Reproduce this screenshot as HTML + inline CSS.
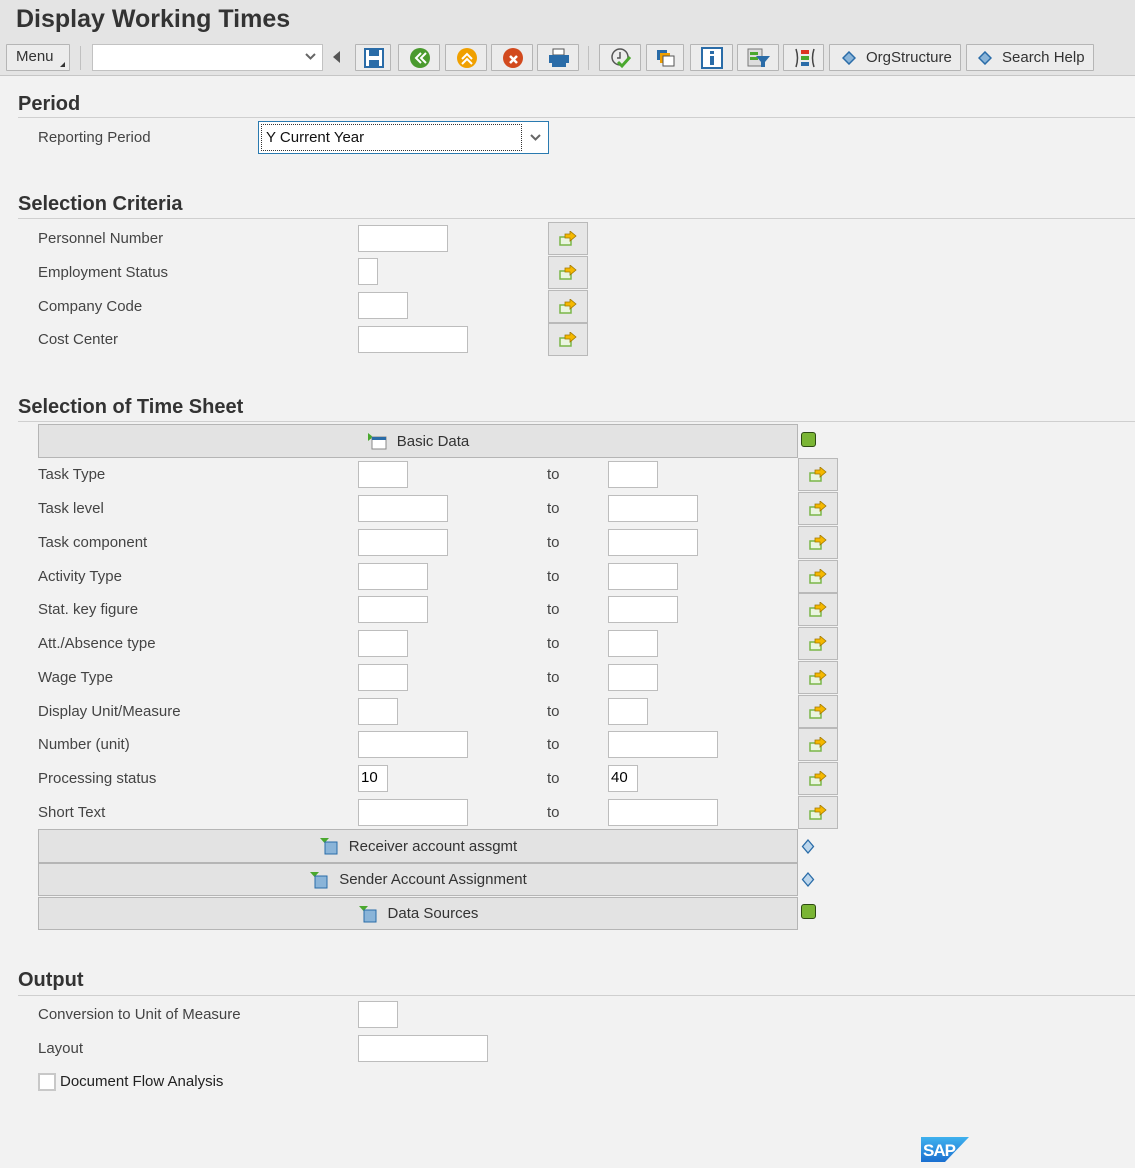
<!DOCTYPE html>
<html><head><meta charset="utf-8"><style>
*{box-sizing:border-box;margin:0;padding:0}
body{width:1135px;height:1168px;background:#f2f2f2;font-family:"Liberation Sans",Arial,sans-serif;position:relative;overflow:hidden;color:#333}
.a{position:absolute}
.hdr{left:0;top:0;width:1135px;height:76px;background:#e4e4e4;border-bottom:1px solid #c6c6c6}
.title{left:16px;top:5px;font-size:25px;font-weight:bold;color:#333}
.tb{position:absolute;top:44px;height:27px;border:1px solid #b5b5b5;background:#ececec;border-radius:1px}
.lbl{position:absolute;left:38px;font-size:15px;color:#444;line-height:18px}
.h{position:absolute;left:18px;font-size:20px;font-weight:bold;color:#333}
.ln{position:absolute;left:18px;width:1117px;height:1px;background:#cfcfcf}
.in{position:absolute;height:27px;background:#fff;border:1px solid #bdbdbd;font-size:15px;padding:3px 0 0 2px;color:#000}
.to{position:absolute;left:547px;font-size:15px;color:#444}
.bt{position:absolute;width:40px;height:33px;border:1px solid #b9b9b9;background:#e6e6e6;display:flex;align-items:center;justify-content:center}
.bar{position:absolute;left:38px;width:760px;height:34px;border:1px solid #b5b5b5;background:#e3e3e3;font-size:15px;color:#333;display:flex;align-items:center;justify-content:center;gap:10px}
.gs{position:absolute;left:801px;width:15px;height:15px;background:#7ab534;border:1.5px solid #2d4a12;border-radius:3px}
</style></head><body>
<div class="a hdr"></div>
<div class="a title">Display Working Times</div>
<div class="tb" style="left:6px;width:64px;font-size:15px;padding:3px 0 0 9px">Menu<span style="position:absolute;right:4px;bottom:3px;width:0;height:0;border-left:5px solid transparent;border-bottom:5px solid #333"></span></div>
<div class="a" style="left:80px;top:46px;width:1px;height:24px;background:#c0c0c0"></div>
<div class="a" style="left:92px;top:44px;width:231px;height:27px;background:#fff;border:1px solid #c2c2c2"><svg class="a" style="right:6px;top:8px" width="11" height="8"><path d="M1 1l4.5 4.5L10 1" stroke="#666" stroke-width="2" fill="none"/></svg></div>
<svg class="a" style="left:333px;top:51px" width="8" height="12"><path d="M7 0v12L0 6z" fill="#555"/></svg>
<div class="tb" style="left:355px;width:36px"><svg class="a" style="left:8px;top:3px" width="20" height="20"><rect x="1" y="1" width="18" height="18" fill="#fff" stroke="#2a6ca8" stroke-width="2"/><rect x="5" y="2" width="10" height="6" fill="#2a6ca8"/><rect x="5" y="12" width="10" height="6" fill="#2a6ca8"/></svg></div>
<div class="tb" style="left:398px;width:42px"><svg class="a" style="left:10px;top:2px" width="22" height="22"><circle cx="11" cy="11" r="10" fill="#4a9a2e"/><path d="M12 6l-5 5 5 5M17 6l-5 5 5 5" stroke="#fff" stroke-width="2" fill="none"/></svg></div>
<div class="tb" style="left:445px;width:42px"><svg class="a" style="left:10px;top:2px" width="22" height="22"><circle cx="11" cy="11" r="10" fill="#f0a000"/><path d="M6 12l5-5 5 5M6 17l5-5 5 5" stroke="#fff" stroke-width="2" fill="none"/></svg></div>
<div class="tb" style="left:491px;width:42px"><svg class="a" style="left:10px;top:2px" width="22" height="22"><circle cx="11" cy="11" r="10" fill="#d24a1e"/><path d="M8 9l7 7M15 9l-7 7" stroke="#fff" stroke-width="2.5"/></svg></div>
<div class="tb" style="left:537px;width:42px"><svg class="a" style="left:10px;top:3px" width="22" height="20"><rect x="5" y="1" width="11" height="6" fill="#fff" stroke="#555"/><rect x="1" y="7" width="20" height="8" fill="#2a6ca8"/><rect x="4" y="15" width="14" height="4" fill="#2a6ca8"/></svg></div>
<div class="a" style="left:588px;top:46px;width:1px;height:24px;background:#c0c0c0"></div>
<div class="tb" style="left:599px;width:42px"><svg class="a" style="left:10px;top:2px" width="22" height="22"><circle cx="10" cy="10" r="8" fill="none" stroke="#555" stroke-width="1.5"/><path d="M10 5v6h-3" stroke="#555" stroke-width="1.5" fill="none"/><path d="M8 15l4 4 8-9" stroke="#4aa82e" stroke-width="3" fill="none"/></svg></div>
<div class="tb" style="left:646px;width:38px"><svg class="a" style="left:8px;top:3px" width="22" height="20"><rect x="2" y="2" width="10" height="10" fill="#2a6ca8"/><rect x="5" y="5" width="10" height="10" fill="#f0a000"/><rect x="8" y="8" width="11" height="10" fill="#fff" stroke="#555"/></svg></div>
<div class="tb" style="left:690px;width:43px"><svg class="a" style="left:10px;top:2px" width="22" height="22"><rect x="1" y="1" width="20" height="20" fill="#fff" stroke="#2a6ca8" stroke-width="2"/><rect x="9" y="4" width="4" height="3" fill="#2a6ca8"/><rect x="9" y="9" width="4" height="9" fill="#2a6ca8"/></svg></div>
<div class="tb" style="left:737px;width:42px"><svg class="a" style="left:9px;top:3px" width="24" height="20"><rect x="1" y="1" width="14" height="17" fill="#ddd" stroke="#777"/><rect x="3" y="4" width="8" height="3" fill="#4aa82e"/><rect x="3" y="9" width="8" height="3" fill="#4aa82e"/><path d="M9 8h14l-5 6v5h-4v-5z" fill="#2a6ca8"/></svg></div>
<div class="tb" style="left:783px;width:41px"><svg class="a" style="left:9px;top:2px" width="24" height="22"><path d="M3 2q3 9 0 18M21 2q-3 9 0 18" stroke="#444" stroke-width="1.5" fill="none"/><rect x="8" y="3" width="8" height="4" fill="#d32"/><rect x="8" y="9" width="8" height="4" fill="#4aa82e"/><rect x="8" y="15" width="8" height="4" fill="#2a6ca8"/></svg></div>
<div class="tb" style="left:829px;width:132px;font-size:15px;padding:4px 0 0 36px">OrgStructure<svg class="a" style="left:12px;top:6px" width="14" height="14"><path d="M7 1l6 6-6 6-6-6z" fill="#8ab4d8" stroke="#2a6ca8" stroke-width="1.5"/></svg></div>
<div class="tb" style="left:966px;width:128px;font-size:15px;padding:4px 0 0 35px">Search Help<svg class="a" style="left:11px;top:6px" width="14" height="14"><path d="M7 1l6 6-6 6-6-6z" fill="#8ab4d8" stroke="#2a6ca8" stroke-width="1.5"/></svg></div>

<div class="h" style="top:93px">Period</div><div class="ln" style="top:117px"></div>
<div class="lbl" style="top:129px">Reporting Period</div>
<div class="a" style="left:258px;top:121px;width:291px;height:33px;background:#fff;border:1px solid #2a7ab0"><div class="a" style="left:2px;top:2px;width:261px;height:27px;border:1px dotted #333;font-size:15px;padding:4px 0 0 4px;color:#111">Y Current Year</div><svg class="a" style="right:7px;top:12px" width="11" height="8"><path d="M1 1l4.5 4.5L10 1" stroke="#666" stroke-width="2" fill="none"/></svg></div>

<div class="h" style="top:193px">Selection Criteria</div><div class="ln" style="top:218px"></div>
<div class="lbl" style="top:230px">Personnel Number</div><div class="in" style="left:358px;top:225px;width:90px"></div>
<div class="lbl" style="top:264px">Employment Status</div><div class="in" style="left:358px;top:258px;width:20px"></div>
<div class="lbl" style="top:298px">Company Code</div><div class="in" style="left:358px;top:292px;width:50px"></div>
<div class="lbl" style="top:331px">Cost Center</div><div class="in" style="left:358px;top:326px;width:110px"></div>
<div class="bt" style="left:548px;top:222px"><svg width="18" height="16"><rect x="1" y="6" width="11" height="8" fill="#eaf5e0" stroke="#7ab648" stroke-width="1.5"/><path d="M6 3h5V0l6 5-6 5V7H6z" fill="#f5b800" stroke="#a07800" stroke-width=".8"/></svg></div>
<div class="bt" style="left:548px;top:256px"><svg width="18" height="16"><rect x="1" y="6" width="11" height="8" fill="#eaf5e0" stroke="#7ab648" stroke-width="1.5"/><path d="M6 3h5V0l6 5-6 5V7H6z" fill="#f5b800" stroke="#a07800" stroke-width=".8"/></svg></div>
<div class="bt" style="left:548px;top:290px"><svg width="18" height="16"><rect x="1" y="6" width="11" height="8" fill="#eaf5e0" stroke="#7ab648" stroke-width="1.5"/><path d="M6 3h5V0l6 5-6 5V7H6z" fill="#f5b800" stroke="#a07800" stroke-width=".8"/></svg></div>
<div class="bt" style="left:548px;top:323px"><svg width="18" height="16"><rect x="1" y="6" width="11" height="8" fill="#eaf5e0" stroke="#7ab648" stroke-width="1.5"/><path d="M6 3h5V0l6 5-6 5V7H6z" fill="#f5b800" stroke="#a07800" stroke-width=".8"/></svg></div>

<div class="h" style="top:396px">Selection of Time Sheet</div><div class="ln" style="top:421px"></div>
<div class="bar" style="top:424px"><svg width="20" height="18"><path d="M1 1v8l5-4z" fill="#4aa82e"/><rect x="5" y="5" width="14" height="12" fill="#fff" stroke="#888"/><rect x="5" y="5" width="14" height="3" fill="#2a6ca8"/></svg>Basic Data</div>
<div class="gs" style="top:432px"></div>

<div class="lbl" style="top:466px">Task Type</div><div class="in" style="left:358px;top:461px;width:50px"></div><div class="to" style="top:466px">to</div><div class="in" style="left:608px;top:461px;width:50px"></div>
<div class="lbl" style="top:500px">Task level</div><div class="in" style="left:358px;top:495px;width:90px"></div><div class="to" style="top:500px">to</div><div class="in" style="left:608px;top:495px;width:90px"></div>
<div class="lbl" style="top:534px">Task component</div><div class="in" style="left:358px;top:529px;width:90px"></div><div class="to" style="top:534px">to</div><div class="in" style="left:608px;top:529px;width:90px"></div>
<div class="lbl" style="top:568px">Activity Type</div><div class="in" style="left:358px;top:563px;width:70px"></div><div class="to" style="top:568px">to</div><div class="in" style="left:608px;top:563px;width:70px"></div>
<div class="lbl" style="top:601px">Stat. key figure</div><div class="in" style="left:358px;top:596px;width:70px"></div><div class="to" style="top:601px">to</div><div class="in" style="left:608px;top:596px;width:70px"></div>
<div class="lbl" style="top:635px">Att./Absence type</div><div class="in" style="left:358px;top:630px;width:50px"></div><div class="to" style="top:635px">to</div><div class="in" style="left:608px;top:630px;width:50px"></div>
<div class="lbl" style="top:669px">Wage Type</div><div class="in" style="left:358px;top:664px;width:50px"></div><div class="to" style="top:669px">to</div><div class="in" style="left:608px;top:664px;width:50px"></div>
<div class="lbl" style="top:703px">Display Unit/Measure</div><div class="in" style="left:358px;top:698px;width:40px"></div><div class="to" style="top:703px">to</div><div class="in" style="left:608px;top:698px;width:40px"></div>
<div class="lbl" style="top:736px">Number (unit)</div><div class="in" style="left:358px;top:731px;width:110px"></div><div class="to" style="top:736px">to</div><div class="in" style="left:608px;top:731px;width:110px"></div>
<div class="lbl" style="top:770px">Processing status</div><div class="in" style="left:358px;top:765px;width:30px">10</div><div class="to" style="top:770px">to</div><div class="in" style="left:608px;top:765px;width:30px">40</div>
<div class="lbl" style="top:804px">Short Text</div><div class="in" style="left:358px;top:799px;width:110px"></div><div class="to" style="top:804px">to</div><div class="in" style="left:608px;top:799px;width:110px"></div>

<div class="bt" style="left:798px;top:458px"><svg width="18" height="16"><rect x="1" y="6" width="11" height="8" fill="#eaf5e0" stroke="#7ab648" stroke-width="1.5"/><path d="M6 3h5V0l6 5-6 5V7H6z" fill="#f5b800" stroke="#a07800" stroke-width=".8"/></svg></div>
<div class="bt" style="left:798px;top:492px"><svg width="18" height="16"><rect x="1" y="6" width="11" height="8" fill="#eaf5e0" stroke="#7ab648" stroke-width="1.5"/><path d="M6 3h5V0l6 5-6 5V7H6z" fill="#f5b800" stroke="#a07800" stroke-width=".8"/></svg></div>
<div class="bt" style="left:798px;top:526px"><svg width="18" height="16"><rect x="1" y="6" width="11" height="8" fill="#eaf5e0" stroke="#7ab648" stroke-width="1.5"/><path d="M6 3h5V0l6 5-6 5V7H6z" fill="#f5b800" stroke="#a07800" stroke-width=".8"/></svg></div>
<div class="bt" style="left:798px;top:560px"><svg width="18" height="16"><rect x="1" y="6" width="11" height="8" fill="#eaf5e0" stroke="#7ab648" stroke-width="1.5"/><path d="M6 3h5V0l6 5-6 5V7H6z" fill="#f5b800" stroke="#a07800" stroke-width=".8"/></svg></div>
<div class="bt" style="left:798px;top:593px"><svg width="18" height="16"><rect x="1" y="6" width="11" height="8" fill="#eaf5e0" stroke="#7ab648" stroke-width="1.5"/><path d="M6 3h5V0l6 5-6 5V7H6z" fill="#f5b800" stroke="#a07800" stroke-width=".8"/></svg></div>
<div class="bt" style="left:798px;top:627px"><svg width="18" height="16"><rect x="1" y="6" width="11" height="8" fill="#eaf5e0" stroke="#7ab648" stroke-width="1.5"/><path d="M6 3h5V0l6 5-6 5V7H6z" fill="#f5b800" stroke="#a07800" stroke-width=".8"/></svg></div>
<div class="bt" style="left:798px;top:661px"><svg width="18" height="16"><rect x="1" y="6" width="11" height="8" fill="#eaf5e0" stroke="#7ab648" stroke-width="1.5"/><path d="M6 3h5V0l6 5-6 5V7H6z" fill="#f5b800" stroke="#a07800" stroke-width=".8"/></svg></div>
<div class="bt" style="left:798px;top:695px"><svg width="18" height="16"><rect x="1" y="6" width="11" height="8" fill="#eaf5e0" stroke="#7ab648" stroke-width="1.5"/><path d="M6 3h5V0l6 5-6 5V7H6z" fill="#f5b800" stroke="#a07800" stroke-width=".8"/></svg></div>
<div class="bt" style="left:798px;top:728px"><svg width="18" height="16"><rect x="1" y="6" width="11" height="8" fill="#eaf5e0" stroke="#7ab648" stroke-width="1.5"/><path d="M6 3h5V0l6 5-6 5V7H6z" fill="#f5b800" stroke="#a07800" stroke-width=".8"/></svg></div>
<div class="bt" style="left:798px;top:762px"><svg width="18" height="16"><rect x="1" y="6" width="11" height="8" fill="#eaf5e0" stroke="#7ab648" stroke-width="1.5"/><path d="M6 3h5V0l6 5-6 5V7H6z" fill="#f5b800" stroke="#a07800" stroke-width=".8"/></svg></div>
<div class="bt" style="left:798px;top:796px"><svg width="18" height="16"><rect x="1" y="6" width="11" height="8" fill="#eaf5e0" stroke="#7ab648" stroke-width="1.5"/><path d="M6 3h5V0l6 5-6 5V7H6z" fill="#f5b800" stroke="#a07800" stroke-width=".8"/></svg></div>

<div class="bar" style="top:829px"><svg width="20" height="18"><path d="M1 1h9l-4.5 5z" fill="#4aa82e"/><rect x="6" y="5" width="12" height="12" fill="#8ab4d8" stroke="#2a6ca8"/></svg>Receiver account assgmt</div>
<svg class="a" style="left:801px;top:839px" width="14" height="15"><path d="M7 1l5.5 6.5L7 14 1.5 7.5z" fill="#bcd6ec" stroke="#2a6ca8" stroke-width="1.3"/></svg>
<div class="bar" style="top:863px;height:33px"><svg width="20" height="18"><path d="M1 1h9l-4.5 5z" fill="#4aa82e"/><rect x="6" y="5" width="12" height="12" fill="#8ab4d8" stroke="#2a6ca8"/></svg>Sender Account Assignment</div>
<svg class="a" style="left:801px;top:872px" width="14" height="15"><path d="M7 1l5.5 6.5L7 14 1.5 7.5z" fill="#bcd6ec" stroke="#2a6ca8" stroke-width="1.3"/></svg>
<div class="bar" style="top:897px;height:33px"><svg width="20" height="18"><path d="M1 1h9l-4.5 5z" fill="#4aa82e"/><rect x="6" y="5" width="12" height="12" fill="#8ab4d8" stroke="#2a6ca8"/></svg>Data Sources</div>
<div class="gs" style="top:904px"></div>

<div class="h" style="top:969px">Output</div><div class="ln" style="top:995px"></div>
<div class="lbl" style="top:1006px">Conversion to Unit of Measure</div><div class="in" style="left:358px;top:1001px;width:40px"></div>
<div class="lbl" style="top:1040px">Layout</div><div class="in" style="left:358px;top:1035px;width:130px"></div>
<div class="a" style="left:38px;top:1073px;width:18px;height:18px;background:#fff;border:2px solid #c8c8c8"></div>
<div class="a" style="left:60px;top:1073px;font-size:15px;color:#222">Document Flow Analysis</div>

<svg class="a" style="left:921px;top:1137px" width="48" height="25"><defs><linearGradient id="g" x1="0" y1="0" x2="0" y2="1"><stop offset="0" stop-color="#3fb1ee"/><stop offset="1" stop-color="#1a6fd0"/></linearGradient></defs><path d="M0 0h48L24 25H0z" fill="url(#g)"/><text x="2" y="19" font-family="Liberation Sans,sans-serif" font-weight="bold" font-size="17" fill="#fff" letter-spacing="-1">SAP</text></svg>
</body></html>
